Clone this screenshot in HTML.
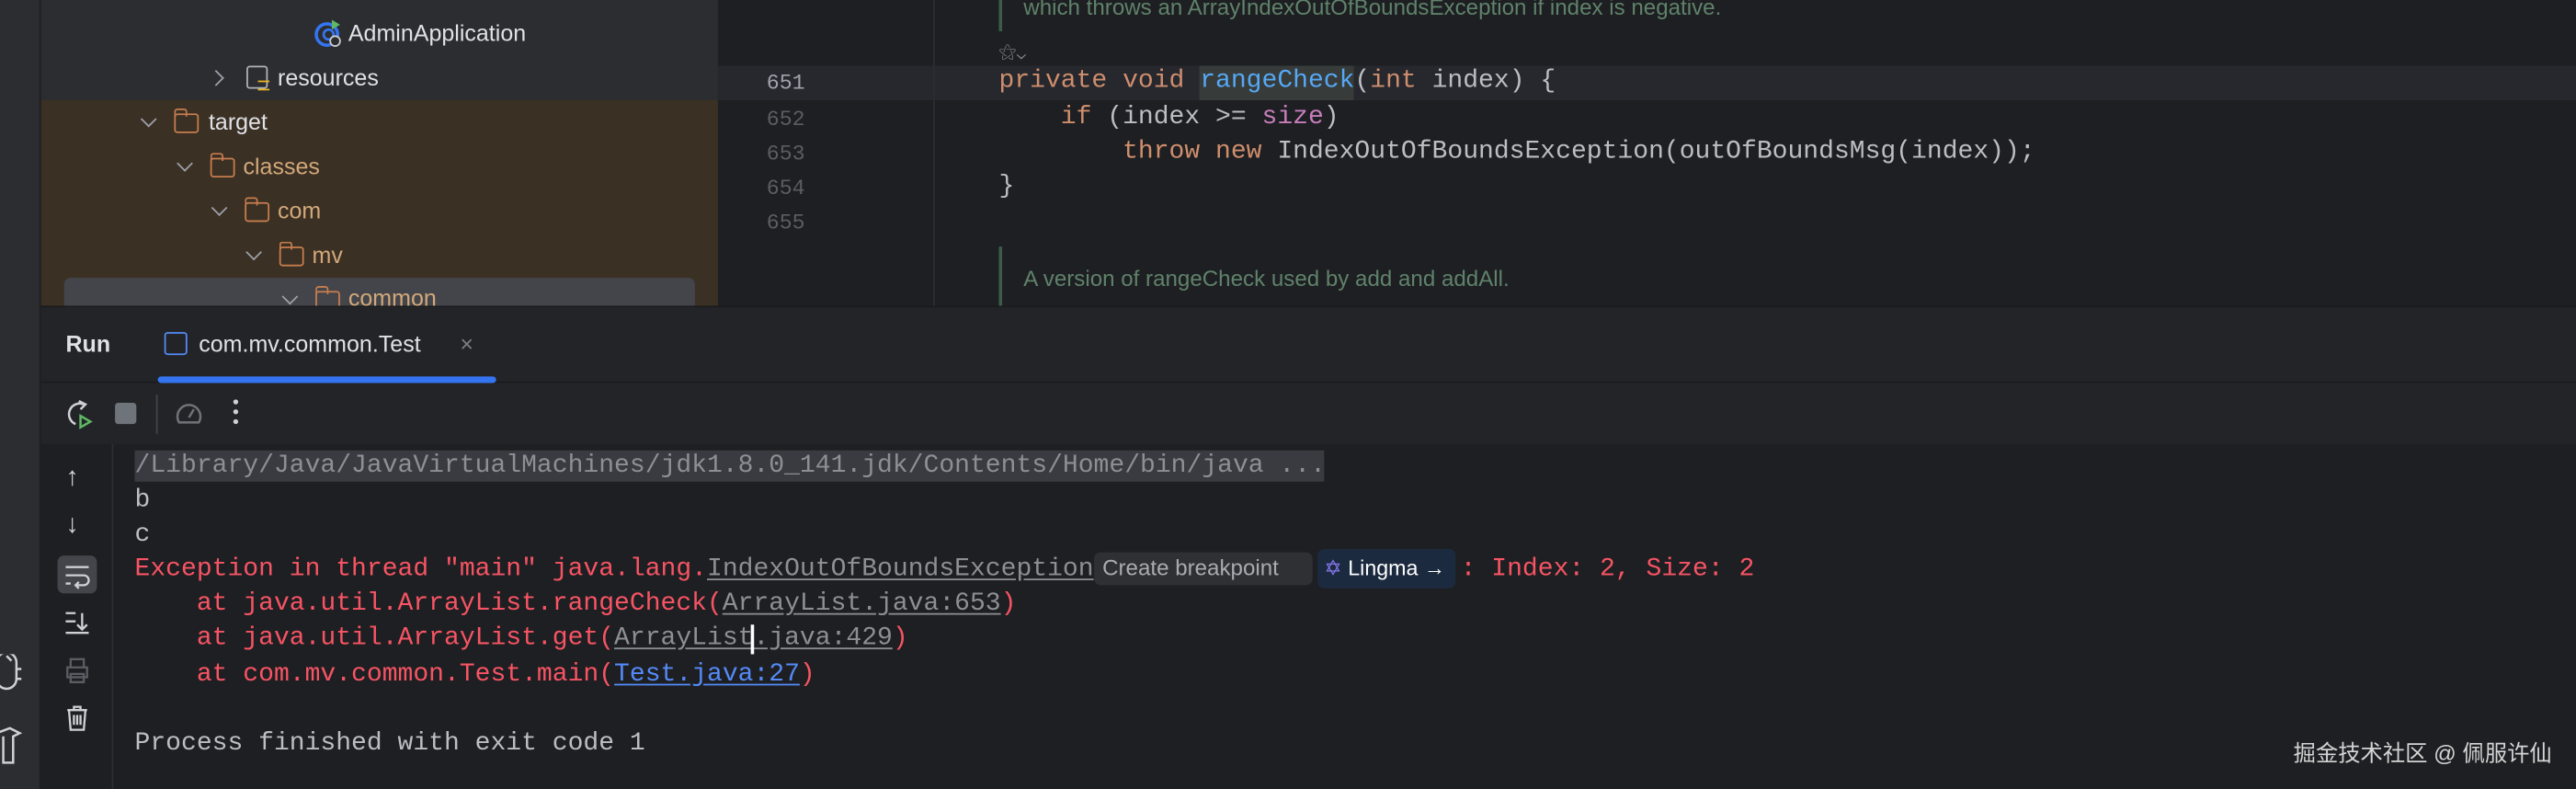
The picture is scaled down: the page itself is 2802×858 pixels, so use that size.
<!DOCTYPE html>
<html><head><meta charset="utf-8"><style>
*{margin:0;padding:0;box-sizing:border-box}
html,body{width:2802px;height:858px;overflow:hidden;background:#1e1f22}
#s{position:absolute;left:0;top:0;width:1568px;height:480px;transform:scale(1.787,1.7875);transform-origin:0 0;background:#1e1f22;font-family:"Liberation Sans","Noto Sans CJK SC",sans-serif;color:#dfe1e5}
.a{position:absolute}
.ui{font-size:14px;line-height:20px;white-space:nowrap}
.mono{font-family:"Liberation Mono",monospace;font-size:15.7px;line-height:21px;white-space:pre;letter-spacing:0}
.chev{position:absolute;width:7px;height:7px;border-right:1.3px solid #9da0a8;border-bottom:1.3px solid #9da0a8}
.fold{position:absolute;width:15px;height:12px;border:1.4px solid #c77d4e;border-radius:2px}
.fold:before{content:"";position:absolute;left:-1.4px;top:-4px;width:6px;height:4px;border:1.4px solid #c77d4e;border-bottom:none;border-radius:2px 2px 0 0}
.tn{color:#d2a87a}
.ln{color:#5a5d63;font-family:"Liberation Mono",monospace;font-size:13px;text-align:right;width:40px}
.kw{color:#cf8e6d}.fn{color:#56a8f5}.pu{color:#c77dbb}
.red{color:#f75464}
.u{text-decoration:underline;text-underline-offset:2px}
.gl{color:#8c8f94}
</style></head><body><div id="s">
<div class="a" style="left:0;top:0;width:25px;height:480px;background:#2b2d30;border-right:1px solid #1e1f22"></div>
<div class="a" style="left:25px;top:0;width:412px;height:186px;background:#2b2d30"></div>
<div class="a" style="left:25px;top:61px;width:412px;height:125px;background:#3b3024"></div>
<div class="a" style="left:39px;top:169px;width:384px;height:20px;background:#43454a;border-radius:4px"></div>
<svg class="a" style="left:191px;top:11px" width="18" height="18" viewBox="0 0 18 18"><circle cx="8" cy="10" r="6.5" fill="none" stroke="#3574f0" stroke-width="2"/><circle cx="9" cy="10" r="3" fill="none" stroke="#3574f0" stroke-width="1.5"/><path d="M11 1l5 3-5 3z" fill="#5fb865"/><circle cx="13" cy="14" r="3" fill="#2b2d30" stroke="#ccc" stroke-width="1"/></svg>
<div class="a ui" style="left:212px;top:10px;color:#dfe1e5">AdminApplication</div>
<div class="chev" style="left:128px;top:44px;transform:rotate(-45deg)"></div>
<div class="a" style="left:150px;top:40px;width:13px;height:14px;border:1.3px solid #b0b3b8;border-radius:2px"></div>
<div class="a" style="left:157px;top:49px;width:7px;height:6px;border-top:1.5px solid #e6b422;border-bottom:1.5px solid #e6b422"></div>
<div class="a ui" style="left:169px;top:37px">resources</div>
<div class="chev" style="left:87px;top:69px;transform:rotate(45deg)"></div>
<div class="fold" style="left:106px;top:69px"></div>
<div class="a ui" style="left:127px;top:64px">target</div>
<div class="chev" style="left:109px;top:96px;transform:rotate(45deg)"></div>
<div class="fold" style="left:128px;top:96px"></div>
<div class="a ui tn" style="left:148px;top:91px">classes</div>
<div class="chev" style="left:130px;top:123px;transform:rotate(45deg)"></div>
<div class="fold" style="left:149px;top:123px"></div>
<div class="a ui tn" style="left:169px;top:118px">com</div>
<div class="chev" style="left:151px;top:150px;transform:rotate(45deg)"></div>
<div class="fold" style="left:170px;top:150px"></div>
<div class="a ui tn" style="left:190px;top:145px">mv</div>
<div style="position:absolute;left:0;top:0;width:437px;height:186px;overflow:hidden">
<div class="chev" style="left:173px;top:177px;transform:rotate(45deg)"></div>
<div class="fold" style="left:192px;top:177px"></div>
<div class="a ui tn" style="left:212px;top:171px">common</div>
</div>
<div class="a" style="left:437px;top:40px;width:1131px;height:21px;background:#26282e"></div>
<div class="a" style="left:568px;top:0;width:1px;height:186px;background:#2b2d30"></div>
<div class="a" style="left:608px;top:0;width:2px;height:19px;background:#3d5c46"></div>
<div class="a ui" style="left:623px;top:-5px;color:#5f826b;font-size:13.5px">which throws an ArrayIndexOutOfBoundsException if index is negative.</div>
<div class="a" style="left:608px;top:26px;color:#8c8f94;font-size:11px">⚝⌄</div>
<div class="a ln" style="left:450px;top:40px;color:#a1a3ab;line-height:21px">651</div>
<div class="a ln" style="left:450px;top:62px;line-height:21px">652</div>
<div class="a ln" style="left:450px;top:83px;line-height:21px">653</div>
<div class="a ln" style="left:450px;top:104px;line-height:21px">654</div>
<div class="a ln" style="left:450px;top:125px;line-height:21px">655</div>
<div class="a" style="left:730px;top:40px;width:94px;height:21px;background:#373b39"></div>
<div class="a mono" style="left:608px;top:39px;color:#bcbec4"><span class="kw">private void </span><span class="fn">rangeCheck</span>(<span class="kw">int</span> index) {</div>
<div class="a mono" style="left:608px;top:61px;color:#bcbec4">    <span class="kw">if</span> (index >= <span class="pu">size</span>)</div>
<div class="a mono" style="left:608px;top:82px;color:#bcbec4">        <span class="kw">throw new</span> IndexOutOfBoundsException(outOfBoundsMsg(index));</div>
<div class="a mono" style="left:608px;top:103px;color:#bcbec4">}</div>
<div class="a" style="left:608px;top:150px;width:2px;height:36px;background:#3d5c46"></div>
<div class="a ui" style="left:623px;top:160px;color:#5f826b;font-size:13.5px">A version of rangeCheck used by add and addAll.</div>
<div class="a" style="left:25px;top:186px;width:1543px;height:1px;background:#1a1b1d"></div>
<div class="a" style="left:25px;top:187px;width:1543px;height:83px;background:#232427"></div>
<div class="a" style="left:25px;top:232px;width:1543px;height:1px;background:#1a1b1d"></div>
<div class="a ui" style="left:40px;top:199px;font-weight:bold;color:#dfe1e5">Run</div>
<div class="a" style="left:100px;top:202px;width:14px;height:14px;border:1.3px solid #548af7;border-radius:2px"></div>
<div class="a ui" style="left:121px;top:199px">com.mv.common.Test</div>
<div class="a ui" style="left:280px;top:199px;color:#7a7e85">×</div>
<div class="a" style="left:96px;top:229px;width:206px;height:4px;background:#3574f0;border-radius:2px"></div>
<svg class="a" style="left:38px;top:242px" width="20" height="20" viewBox="0 0 20 20"><path d="M13 4A6 6 0 1 0 8 16" fill="none" stroke="#ced0d6" stroke-width="1.4"/><path d="M10 2l4 2-3 3" fill="none" stroke="#ced0d6" stroke-width="1.4"/><path d="M11 11l6 3.5-6 3.5z" fill="none" stroke="#5fb865" stroke-width="1.4"/></svg>
<div class="a" style="left:70px;top:245px;width:13px;height:13px;background:#6f737a;border-radius:2px"></div>
<div class="a" style="left:95px;top:240px;width:1px;height:24px;background:#43454a"></div>
<svg class="a" style="left:105px;top:242px" width="20" height="20" viewBox="0 0 20 20"><path d="M4 15a7 7 0 1 1 12 0z" fill="none" stroke="#6f737a" stroke-width="1.4"/><path d="M10 12l3-5" stroke="#6f737a" stroke-width="1.4"/></svg>
<div class="a" style="left:142px;top:243px;width:3px;height:3px;background:#ced0d6;border-radius:50%;box-shadow:0 6px 0 #ced0d6,0 12px 0 #ced0d6"></div>
<div class="a" style="left:68px;top:270px;width:1px;height:210px;background:#2b2d30"></div>
<div class="a ui" style="left:40px;top:281px;font-size:16px;color:#ced0d6">↑</div>
<div class="a ui" style="left:40px;top:310px;font-size:16px;color:#ced0d6">↓</div>
<div class="a" style="left:35px;top:338px;width:24px;height:23px;background:#43454a;border-radius:4px"></div>
<svg class="a" style="left:38px;top:341px" width="18" height="18" viewBox="0 0 18 18"><path d="M2 4h14M2 9h11a3 3 0 0 1 0 6H8M2 14h3M10 13l-2 2 2 2" fill="none" stroke="#ced0d6" stroke-width="1.3"/></svg>
<svg class="a" style="left:38px;top:370px" width="18" height="18" viewBox="0 0 18 18"><path d="M2 3h6M2 8h6M2 15h14M12 3v10M9 10l3 3 3-3" fill="none" stroke="#ced0d6" stroke-width="1.3"/></svg>
<svg class="a" style="left:38px;top:399px" width="18" height="18" viewBox="0 0 18 18"><path d="M5 7V2h8v5M3 7h12v6H3zM5 11h8v5H5z" fill="none" stroke="#5a5d63" stroke-width="1.3"/></svg>
<svg class="a" style="left:38px;top:428px" width="18" height="18" viewBox="0 0 18 18"><path d="M3 4h12M7 4V2h4v2M4 4l1 12h8l1-12M7 7v6M9 7v6M11 7v6" fill="none" stroke="#ced0d6" stroke-width="1.3"/></svg>
<svg class="a" style="left:0;top:398px" width="14" height="24" viewBox="0 0 14 24"><path d="M-2 5a6 6 0 0 1 12 0v10a6 6 0 0 1-12 0zM10 9h3M10 15h3M4 1l3 3" fill="none" stroke="#ced0d6" stroke-width="1.4"/></svg>
<svg class="a" style="left:0;top:440px" width="14" height="26" viewBox="0 0 14 26"><path d="M-2 6l8-3 6 3-4 2v16H2V8" fill="none" stroke="#ced0d6" stroke-width="1.4"/></svg>
<div class="a" style="left:82px;top:274px;width:724px;height:19px;background:#393b40"></div>
<div class="a mono" style="left:82px;top:273px;color:#8c8f94">/Library/Java/JavaVirtualMachines/jdk1.8.0_141.jdk/Contents/Home/bin/java ...</div>
<div class="a mono" style="left:82px;top:294px;color:#bcbec4">b</div>
<div class="a mono" style="left:82px;top:315px;color:#bcbec4">c</div>
<div class="a mono red" style="left:82px;top:336px">Exception in thread "main" java.lang.<span class="u gl">IndexOutOfBoundsException</span></div>
<div class="a" style="left:666px;top:336px;width:133px;height:20px;background:#2e3034;border-radius:4px"></div>
<div class="a ui" style="left:671px;top:336px;color:#a8abb0;font-size:13.5px">Create breakpoint</div>
<div class="a" style="left:802px;top:334px;width:84px;height:24px;background:#1c2a3f;border-radius:4px"></div>
<div class="a ui" style="left:806px;top:336px;font-size:13px;color:#fff"><span style="color:#8b7cf6">✡</span> Lingma →</div>
<div class="a mono red" style="left:889px;top:336px">: Index: 2, Size: 2</div>
<div class="a mono red" style="left:82px;top:357px">    at java.util.ArrayList.rangeCheck(<span class="u gl">ArrayList.java:653</span>)</div>
<div class="a mono red" style="left:82px;top:378px">    at java.util.ArrayList.get(<span class="u gl">ArrayList.java:429</span>)</div>
<div class="a" style="left:457px;top:380px;width:1.5px;height:18px;background:#fff"></div>
<div class="a mono red" style="left:82px;top:400px">    at com.mv.common.Test.main(<span class="u" style="color:#548af7">Test.java:27</span>)</div>
<div class="a mono" style="left:82px;top:442px;color:#bcbec4">Process finished with exit code 1</div>
<div class="a" style="left:1396px;top:449px;font-size:13.6px;line-height:20px;color:#d4d4d4;white-space:nowrap;font-family:'Liberation Sans','Noto Sans CJK SC',sans-serif">掘金技术社区 @ 佩服许仙</div>
</div></body></html>
